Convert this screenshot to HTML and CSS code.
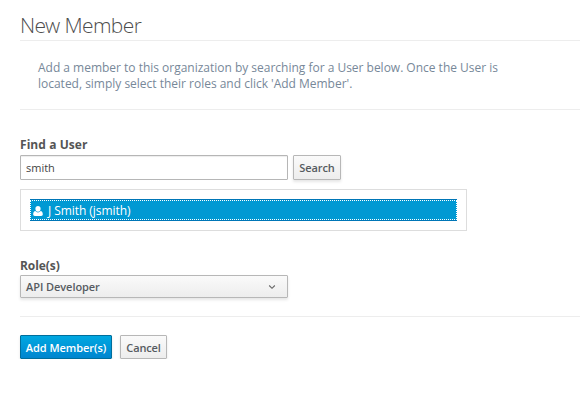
FILE: index.html
```html
<!DOCTYPE html>
<html lang="en">
<head>
<meta charset="utf-8">
<title>New Member</title>
<link rel="stylesheet" href="styles.css">
</head>
<body>
<main class="page">
  <h1 class="title">New Member</h1>
  <p class="intro">Add a member to this organization by searching for a User below. Once the User is located, simply select their roles and click 'Add Member'.</p>
  <form class="form">
    <label class="label" for="user">Find a User</label>
    <div class="search">
      <input class="input" id="user" type="text" value="smith">
      <button class="btn" type="button">Search</button>
    </div>
    <div class="results">
      <div class="result">
        <div class="result-body">
          <svg class="user-icon" viewBox="0 0 10 12"><path d="M5 1C3.4 1 2.400 2.100 2.400 3.700c0 1.700 1 3.100 2.600 3.100s2.600-1.400 2.600-3.100C7.600 2.100 6.600 1 5 1zM2.400 6C1 6 .2 7.400.2 9.300.2 10.400.8 11 1.800 11h6.400c1 0 1.600-.6 1.600-1.700C9.800 7.400 9 6 7.600 6 7 6.900 6.100 7.400 5 7.400S3 6.900 2.400 6z"/></svg>
          <span class="result-name">J Smith (jsmith)</span>
        </div>
      </div>
    </div>
    <label class="label roles">Role(s)</label>
    <button class="btn select" type="button">
      <span>API Developer</span>
      <svg class="chevron" viewBox="0 0 8 6"><path d="M1.200 1.500 4 4.300 6.800 1.500"/></svg>
    </button>
    <div class="actions">
      <button class="btn primary" type="button">Add Member(s)</button>
      <button class="btn cancel" type="button">Cancel</button>
    </div>
  </form>
</main>
</body>
</html>
```
FILE: styles.css
```css
* {
  box-sizing: border-box;
}

body {
  margin: 0;
  background: #fff;
  color: #4d5258;
  font: 12px/16px "Open Sans", sans-serif;
  overflow: hidden;
}

.page {
  padding: 11px 0 0 20px;
}

.title {
  height: 30px;
  margin: 0;
  border-bottom: 1px solid #ededed;
  color: #4d4d4d;
  font-family: "Open Sans Light", "Open Sans", sans-serif;
  font-size: 21px;
  font-weight: 300;
  line-height: 29px;
  letter-spacing: -.6px;
}

.intro {
  height: 69px;
  margin: 0;
  padding: 19px 60px 0 18px;
  border-bottom: 1px solid #ededed;
  color: #778899;
  letter-spacing: -.012px;
}

.form {
  padding-top: 26px;
}

.label {
  display: block;
  height: 19px;
  line-height: 18px;
  color: #555;
  font-weight: 700;
  letter-spacing: .06px;
}

.roles {
  line-height: 20px;
  letter-spacing: -.06px;
}

.search {
  display: flex;
  gap: 5px;
}

.input {
  width: 268px;
  height: 25px;
  padding: 0 5px;
  border: 1px solid #b6b6b6;
  border-radius: 1px;
  outline: 0;
  box-shadow: inset 0 1px 1px rgba(0, 0, 0, .075);
  color: #444;
  font: 11px "Open Sans", sans-serif;
}

.btn {
  width: 48px;
  height: 25px;
  padding: 0;
  border: 1px solid #b7b7b7;
  border-radius: 1px;
  background: linear-gradient(#fafafa, #ededed);
  box-shadow: 0 2px 3px rgba(0, 0, 0, .1);
  color: #565b61;
  font: 600 11px/21px "Open Sans", sans-serif;
  letter-spacing: -.06px;
  white-space: nowrap;
}

.results {
  width: 447px;
  height: 42px;
  margin: 9px 0 25px;
  padding: 9px;
  border: 1px solid #ddd;
}

.result {
  height: 22px;
  border: solid #0076b7;
  border-width: 1px 0;
}

.result-body {
  display: flex;
  align-items: center;
  height: 20px;
  padding-left: 3px;
  outline: 1px dotted #fff;
  outline-offset: -1px;
  background: #0099d3;
  color: #fff;
}

.result-name {
  padding-top: 2px;
  letter-spacing: -.06px;
}

.user-icon {
  width: 10px;
  height: 12px;
  margin: 2px 5px 0 0;
  fill: #fff;
}

.select {
  display: flex;
  align-items: center;
  justify-content: space-between;
  width: 268px;
  height: 23px;
  padding: 0 11px 0 5px;
}

.chevron {
  width: 8px;
  height: 6px;
  margin-top: 1px;
  fill: none;
  stroke: #666;
  stroke-width: 1.1;
}

.actions {
  display: flex;
  gap: 8px;
  margin-top: 18px;
  padding-top: 18px;
  border-top: 1px solid #ededed;
}

.actions .btn {
  height: 24px;
  padding-top: 1px;
}

.actions .primary {
  width: 92px;
  border-color: #006e9c;
  background: linear-gradient(#00a8e1, #0085cf);
  color: #fff;
}

.actions .cancel {
  width: 47px;
  letter-spacing: -.15px;
}
```
